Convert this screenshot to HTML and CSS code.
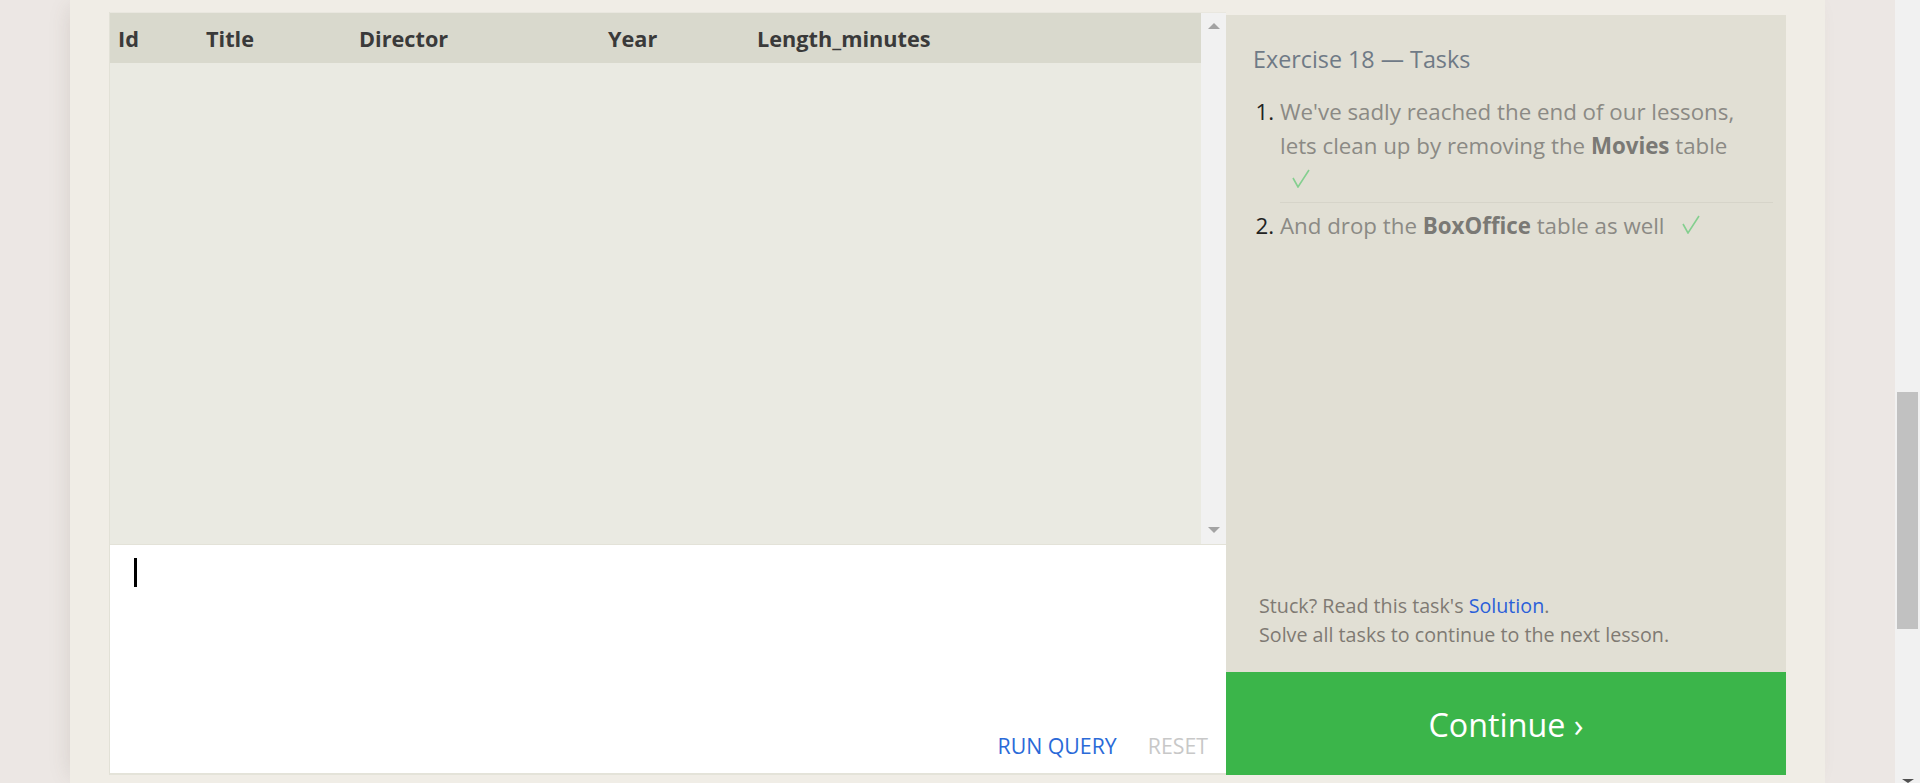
FILE: index.html
```html
<!DOCTYPE html>
<html lang="en">
<head>
<meta charset="utf-8">
<title>SQLBolt - Exercise 18</title>
<link rel="stylesheet" href="styles.css">
</head>
<body>
<div class="viewport">
  <main class="container">
    <section class="exercise">
      <div class="left">
        <div class="results">
          <div class="table-wrap">
            <table class="results-table">
              <thead>
                <tr>
                  <th class="c-id">Id</th>
                  <th class="c-title">Title</th>
                  <th class="c-director">Director</th>
                  <th class="c-year">Year</th>
                  <th class="c-length">Length_minutes</th>
                </tr>
              </thead>
              <tbody></tbody>
            </table>
          </div>
          <div class="vscroll">
            <span class="arrow-up"></span>
            <span class="arrow-down"></span>
          </div>
        </div>
        <div class="editor">
          <div class="editor-input"><span class="caret"></span></div>
          <div class="editor-actions">
            <span class="run">RUN QUERY</span>
            <span class="reset">RESET</span>
          </div>
        </div>
      </div>
      <aside class="tasks">
        <div class="tasks-body">
          <h2 class="tasks-title">Exercise 18 — Tasks</h2>
          <ol class="task-list">
            <li>We've sadly reached the end of our lessons, lets clean up by removing the <strong>Movies</strong> table <span class="check"><svg width="18" height="19" viewBox="0 0 18 19"><polyline points="1,9 6,18 17,1" fill="none" stroke="#84cf8f" stroke-width="1.6"/></svg></span></li>
            <li>And drop the <strong>BoxOffice</strong> table as well <span class="check"><svg width="18" height="19" viewBox="0 0 18 19"><polyline points="1,9 6,18 17,1" fill="none" stroke="#84cf8f" stroke-width="1.6"/></svg></span></li>
          </ol>
        </div>
        <div class="stuck">
          <p>Stuck? Read this task's <a class="solution" href="#">Solution</a>.</p>
          <p>Solve all tasks to continue to the next lesson.</p>
        </div>
        <button class="continue" type="button">Continue ›</button>
      </aside>
    </section>
  </main>
</div>
<div class="page-scroll">
  <div class="thumb"></div>
  <span class="page-down"></span>
</div>
</body>
</html>
```

FILE: styles.css
```css
html, body {
  margin: 0;
  padding: 0;
}
body {
  height: 783px;
  overflow: hidden;
  display: flex;
  background: #ece7e4;
  font-family: "Open Sans", "Noto Sans", sans-serif;
}
.viewport {
  flex: 1;
  overflow: hidden;
}
.container {
  width: 1755px;
  height: 783px;
  box-sizing: border-box;
  margin: 0 auto;
  padding: 12px 39px 0 39px;
  background: #f0ede6;
  box-shadow: -6px 0 22px -8px rgba(90, 70, 60, 0.18);
}
.exercise {
  display: flex;
  height: 763px;
}
.left {
  flex: 1;
  display: flex;
  flex-direction: column;
  border-left: 1px solid #e2e1d7;
}
.results {
  display: flex;
  height: 531px;
  border-top: 1px solid #e9e7df;
}
.table-wrap {
  flex: 1;
  background: #eaeae2;
}
.results-table {
  width: 100%;
  border-collapse: collapse;
  table-layout: fixed;
}
.results-table th {
  height: 50px;
  padding: 0 8px;
  background: #d9d9cd;
  color: #3a3a3a;
  font-size: 21.7px;
  font-weight: 700;
  text-align: left;
}
.c-id { width: 72px; }
.c-title { width: 137px; }
.c-director { width: 233px; }
.c-year { width: 133px; }
.vscroll {
  width: 25px;
  background: #f1f1f1;
  display: flex;
  flex-direction: column;
  justify-content: space-between;
  align-items: center;
  padding: 10px 0 11px;
  box-sizing: border-box;
}
.arrow-up {
  width: 0;
  height: 0;
  border-left: 6px solid transparent;
  border-right: 6px solid transparent;
  border-bottom: 6px solid #a3a3a3;
}
.arrow-down {
  width: 0;
  height: 0;
  border-left: 6px solid transparent;
  border-right: 6px solid transparent;
  border-top: 6px solid #a3a3a3;
}
.editor {
  flex: 1;
  display: flex;
  flex-direction: column;
  background: #ffffff;
  border-top: 1px solid #e3e2d8;
  border-bottom: 2px solid #e4e3d9;
}
.editor-input {
  flex: 1;
  padding: 13px 0 0 24px;
}
.caret {
  display: block;
  width: 3px;
  height: 29px;
  background: #000;
}
.editor-actions {
  display: flex;
  justify-content: flex-end;
  gap: 31px;
  padding: 0 18px 14px 0;
  font-size: 21.3px;
  line-height: 26px;
}
.run { color: #2a6ad8; }
.reset { color: #c8c8c8; }
.tasks {
  width: 560px;
  margin-top: 3px;
  display: flex;
  flex-direction: column;
  background: #e1dfd4;
}
.tasks-body {
  flex: 1;
  padding: 30px 13px 0 27px;
}
.tasks-title {
  margin: 0;
  font-size: 23.3px;
  font-weight: 400;
  line-height: 28px;
  color: #6f7a86;
}
.task-list {
  margin: 22px 0 0 0;
  padding: 0 0 0 27px;
  color: #8b8a85;
  font-size: 22.3px;
  line-height: 34px;
}
.task-list li {
  padding: 0 23px 5px 0;
}
.task-list li::marker {
  color: #222222;
}
.task-list li + li {
  border-top: 1px solid #d6d4c9;
  padding-top: 6px;
}
.task-list strong {
  color: #7a7975;
}
.check {
  display: inline-block;
  margin-left: 12px;
}
.stuck {
  padding: 0 20px 23px 33px;
  color: #7f7a73;
  font-size: 19.7px;
  line-height: 29px;
}
.stuck p {
  margin: 0;
}
.solution {
  color: #2b5fd9;
  text-decoration: none;
}
.continue {
  height: 103px;
  border: 0;
  margin: 0;
  background: #3bb54a;
  color: #ffffff;
  font-family: inherit;
  font-size: 32.3px;
}
.page-scroll {
  width: 25px;
  background: #f1f1f1;
  display: flex;
  flex-direction: column;
  align-items: center;
}
.thumb {
  width: 21px;
  height: 237px;
  margin-top: 392px;
  background: #c1c1c1;
}
.page-down {
  margin-top: auto;
  width: 0;
  height: 0;
  border-left: 6px solid transparent;
  border-right: 6px solid transparent;
  border-top: 4px solid #505050;
}
```
